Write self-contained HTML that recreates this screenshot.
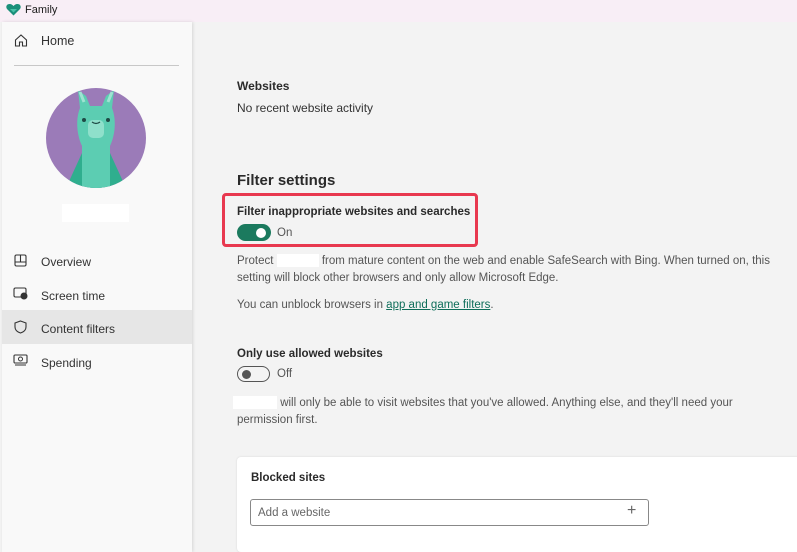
<!DOCTYPE html><html><head><style>
body{margin:0;width:797px;height:543px;overflow:hidden;background:#f3f3f3;font-family:"Liberation Sans",sans-serif;position:relative;color:#1b1b1b}
.t{position:absolute;white-space:nowrap}
#title{position:absolute;left:0;top:0;width:797px;height:22px;background:#f8eef6}
#side{position:absolute;left:2px;top:22px;width:190px;height:530px;background:#f9f9f9;box-shadow:1px 0 3px rgba(0,0,0,.12)}
.nav{font-size:12px;color:#333}
.g{font-size:11.5px;color:#555}
</style></head><body>
<div id="title"></div>
<svg class="t" style="left:6px;top:3px" width="15" height="13" viewBox="0 0 15 13"><path d="M7.5 12.5L1 6C-0.5 4 0.5 1 3.5 1C5.5 1 6.5 2 7.5 3C8.5 2 9.5 1 11.5 1C14.5 1 15.5 4 14 6Z" fill="#1a8f7a"/><path d="M4 6h7l-3.5 3.5z" fill="#48c2a8"/></svg>
<div class="t" style="left:25px;top:4px;font-size:11px">Family</div>
<div id="side"></div>
<svg class="t" style="left:14px;top:34px" width="14" height="13" viewBox="0 0 14 13"><path d="M1.5 6L7 1l5.5 5V12H8.5V8h-3v4H1.5z" fill="none" stroke="#333" stroke-width="1.1"/></svg>
<div class="t nav" style="left:41px;top:34px;font-size:12.5px">Home</div>
<div class="t" style="left:14px;top:65px;width:165px;height:1px;background:#c8c8c8"></div>
<svg class="t" style="left:46px;top:88px" width="100" height="100" viewBox="0 0 100 100"><defs><clipPath id="c"><circle cx="50" cy="50" r="50"/></clipPath></defs><g clip-path="url(#c)"><rect width="100" height="100" fill="#9b7bb8"/><path d="M20 100L36 65H64L80 100z" fill="#2fae8e"/><path d="M36 100V58C30 45 30 30 34 20L32 2L40 8L44 18H56L60 8L68 2L66 20C70 30 70 45 64 58V100z" fill="#5ccdb2"/><path d="M34 4L38 14M66 4L62 14" stroke="#9fe3d2" stroke-width="3"/><rect x="42" y="32" width="16" height="18" rx="5" fill="#8fe0cb"/><circle cx="38" cy="32" r="2" fill="#1f4a45"/><circle cx="62" cy="32" r="2" fill="#1f4a45"/><path d="M46 34q4 3 8 0" stroke="#1f4a45" fill="none" stroke-width="1.2"/></g></svg>
<div class="t" style="left:62px;top:204px;width:67px;height:18px;background:#fff"></div>
<svg class="t" style="left:14px;top:254px" width="13" height="13" viewBox="0 0 13 13"><rect x="1" y="1" width="11" height="11" rx="1.5" fill="none" stroke="#333" stroke-width="1.1"/><path d="M6.5 1v7M1 8h11" stroke="#333" stroke-width="1.1"/></svg>
<div class="t nav" style="left:41px;top:255px">Overview</div>
<svg class="t" style="left:13px;top:287px" width="15" height="13" viewBox="0 0 15 13"><rect x="1" y="1" width="12" height="9" rx="1.5" fill="none" stroke="#333" stroke-width="1.1"/><circle cx="11" cy="9" r="3.5" fill="#333"/></svg>
<div class="t nav" style="left:41px;top:289px">Screen time</div>
<div class="t" style="left:2px;top:310px;width:190px;height:34px;background:#e6e6e6"></div>
<svg class="t" style="left:14px;top:320px" width="13" height="14" viewBox="0 0 13 14"><path d="M6.5 1L12 3V7C12 10 9.5 12 6.5 13C3.5 12 1 10 1 7V3z" fill="none" stroke="#333" stroke-width="1.1"/></svg>
<div class="t nav" style="left:41px;top:322px">Content filters</div>
<svg class="t" style="left:13px;top:354px" width="15" height="12" viewBox="0 0 15 12"><rect x="1" y="1" width="13" height="8" rx="1" fill="none" stroke="#333" stroke-width="1.1"/><circle cx="7.5" cy="5" r="2" fill="none" stroke="#333"/><path d="M2 11h11" stroke="#333"/></svg>
<div class="t nav" style="left:41px;top:356px">Spending</div>

<div class="t" style="left:237px;top:79px;font-size:12px;font-weight:bold;color:#2a2a2a">Websites</div>
<div class="t" style="left:237px;top:101px;font-size:12px;color:#333">No recent website activity</div>
<div class="t" style="left:237px;top:172px;font-size:15px;font-weight:bold;color:#2a2a2a">Filter settings</div>
<div class="t" style="left:222px;top:193px;width:250px;height:48px;border:3px solid #e8384f;border-radius:4px"></div>
<div class="t" style="left:237px;top:206px;font-size:11.5px;font-weight:bold;color:#2a2a2a">Filter inappropriate websites and searches</div>
<div class="t" style="left:237px;top:224px;width:34px;height:17px;border-radius:9px;background:#1b7a5e"></div>
<div class="t" style="left:256px;top:228px;width:10px;height:10px;border-radius:5px;background:#fff"></div>
<div class="t g" style="left:277px;top:227px">On</div>
<div class="t g" style="left:237px;top:253px;line-height:17px">Protect <span style="display:inline-block;width:42px;height:13px;background:#fff;vertical-align:middle"></span> from mature content on the web and enable SafeSearch with Bing. When turned on, this<br>setting will block other browsers and only allow Microsoft Edge.</div>
<div class="t g" style="left:237px;top:299px">You can unblock browsers in <span style="color:#0e6e5a;text-decoration:underline">app and game filters</span>.</div>
<div class="t" style="left:237px;top:348px;font-size:11.5px;font-weight:bold;color:#2a2a2a">Only use allowed websites</div>
<div class="t" style="left:237px;top:366px;width:31px;height:14px;border-radius:9px;border:1.5px solid #555"></div>
<div class="t" style="left:242px;top:370px;width:9px;height:9px;border-radius:5px;background:#555"></div>
<div class="t g" style="left:277px;top:368px">Off</div>
<div class="t g" style="left:233px;top:395px;line-height:17px"><span style="display:inline-block;width:44px;height:13px;background:#fff;vertical-align:middle"></span> will only be able to visit websites that you've allowed. Anything else, and they'll need your<br><span style="margin-left:4px">permission first.</span></div>
<div class="t" style="left:237px;top:457px;width:565px;height:95px;background:#fff;border-radius:4px;box-shadow:0 0 2px rgba(0,0,0,.12)"></div>
<div class="t" style="left:251px;top:472px;font-size:11.5px;font-weight:bold;color:#2a2a2a">Blocked sites</div>
<div class="t" style="left:250px;top:499px;width:397px;height:25px;border:1px solid #888;border-radius:3px"></div>
<div class="t" style="left:258px;top:507px;font-size:11.5px;color:#666">Add a website</div>
<div class="t" style="left:627px;top:502px;font-size:16px;color:#666">+</div>
</body></html>
